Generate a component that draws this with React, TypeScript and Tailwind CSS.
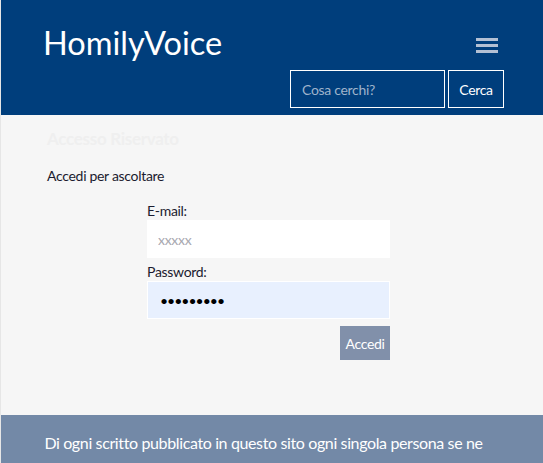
import React from "react";

export default function App() {
  return (
    <div className="w-[543px] h-[463px] overflow-hidden bg-[#f6f6f6] border-l border-[#e6e6e6]" style={{ fontFamily: "Lato, 'Noto Sans', sans-serif" }}>
      <header className="h-[115px] bg-[#003e7c] relative">
        <div className="flex items-start justify-between pl-[42px] pr-[45px] pt-[24px]">
          <h1 className="text-[32.5px] leading-[38px] text-white font-normal">HomilyVoice</h1>
          <button className="mt-[14px] flex flex-col gap-[3px]" aria-label="menu">
            <span className="block w-[22px] h-[3px] bg-[#b3c0d4]"></span>
            <span className="block w-[22px] h-[3px] bg-[#b3c0d4]"></span>
            <span className="block w-[22px] h-[3px] bg-[#b3c0d4]"></span>
          </button>
        </div>
        <div className="flex justify-end gap-[3px] pr-[39px] mt-[8px]">
          <input
            className="w-[155px] h-[38px] border border-white bg-transparent px-[11px] text-[14px] tracking-[-0.3px] text-white placeholder:text-[#9fb3cb] outline-none"
            placeholder="Cosa cerchi?"
          />
          <button className="w-[56px] h-[38px] border border-white text-white text-[14px] tracking-[-0.3px]">Cerca</button>
        </div>
      </header>
      <main className="h-[300px] pl-[46px] tracking-[-0.3px]">
        <h2 className="pt-[14px] text-[17px] font-bold text-[#efefef] leading-[20px]">Accesso Riservato</h2>
        <p className="mt-[18px] text-[14px] text-[#1b1b2f] leading-[18px]">Accedi per ascoltare</p>
        <form className="ml-[100px] w-[243px] mt-[17px] flex flex-col">
          <label className="text-[14px] text-[#1b1b2f] leading-[18px]">E-mail:</label>
          <input className="h-[38px] bg-white px-[11px] text-[14px] placeholder:text-[#a8a8b0] outline-none" placeholder="xxxxx" />
          <label className="mt-[5px] text-[14px] text-[#1b1b2f] leading-[18px]">Password:</label>
          <input
            type="password"
            defaultValue="123456789"
            className="h-[38px] bg-[#e8f0fe] border border-white pl-[12px] pr-[10px] text-[14px] tracking-[-1px] text-black outline-none"
          />
          <div className="flex justify-end mt-[7px]">
            <button type="button" className="w-[50px] h-[34px] bg-[#8190aa] text-white text-[14px]">Accedi</button>
          </div>
        </form>
      </main>
      <footer className="bg-[#7389a7] pt-[15px] pl-[20px] pr-[37px] text-center text-white text-[16px] tracking-[-0.37px] leading-[26px]">
        Di ogni scritto pubblicato in questo sito ogni singola persona se ne assume piena e totale responsabilità, sia morale che giuridica.
      </footer>
    </div>
  );
}
